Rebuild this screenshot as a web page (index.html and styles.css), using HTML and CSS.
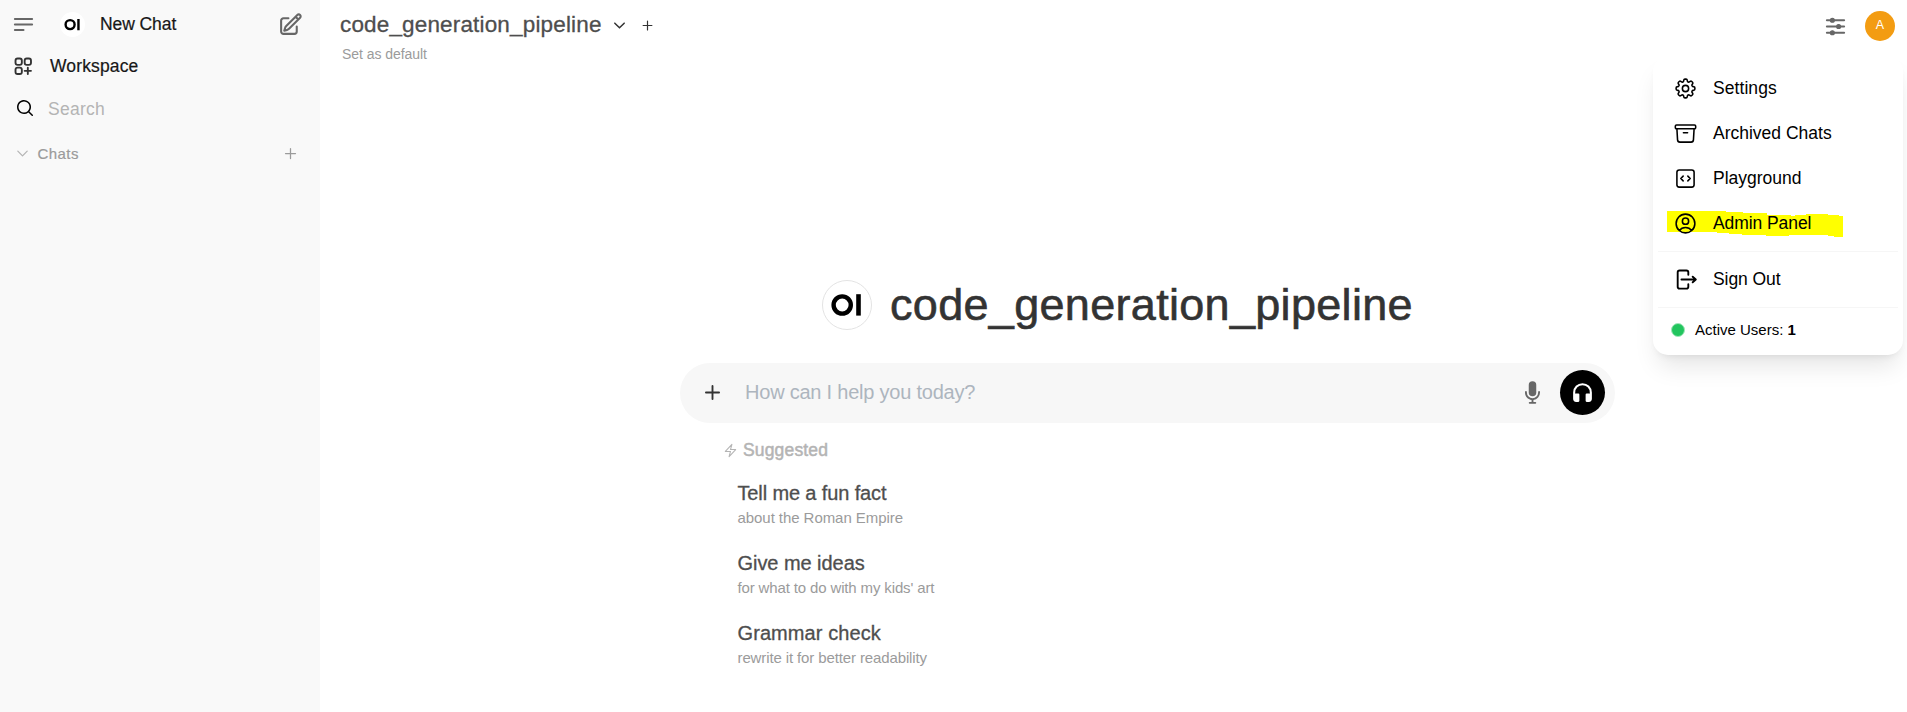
FILE: index.html
```html
<!DOCTYPE html>
<html lang="en">
<head>
<meta charset="utf-8">
<title>Open WebUI</title>
<link rel="stylesheet" href="styles.css">
</head>
<body>
<div class="app">
  <aside class="sidebar">
    <div class="side-head">
      <svg class="icon i25 gray" viewBox="0 0 24 24" stroke-width="2"><path d="M3.75 6.75h16.5M3.75 12h16.5m-16.5 5.25H12"/></svg>
      <svg class="logo-sm" viewBox="0 0 50 50"><circle cx="25" cy="25" r="25" fill="#fff"/><circle cx="20.2" cy="25.2" r="9" fill="none" stroke="#000" stroke-width="4.8"/><rect x="34.5" y="14" width="4.8" height="22.5"/></svg>
      <span class="t new-chat">New Chat</span>
      <svg class="icon i25 gray edit" viewBox="0 0 24 24" stroke-width="2"><path d="m16.862 4.487 1.687-1.688a1.875 1.875 0 1 1 2.652 2.652L10.582 16.07a4.5 4.5 0 0 1-1.897 1.13L6 18l.8-2.685a4.5 4.5 0 0 1 1.13-1.897l8.932-8.931Zm0 0L19.5 7.125M18 14v4.75A2.25 2.25 0 0 1 15.75 21H5.25A2.25 2.25 0 0 1 3 18.75V8.25A2.25 2.25 0 0 1 5.25 6H10"/></svg>
    </div>
    <div class="side-work">
      <svg class="icon i22 dark" viewBox="0 0 24 24" stroke-width="2"><path d="M13.5 16.875h3.375m0 0h3.375m-3.375 0V13.5m0 3.375v3.375M6 10.5h2.25a2.25 2.25 0 0 0 2.25-2.25V6a2.25 2.25 0 0 0-2.25-2.25H6A2.25 2.25 0 0 0 3.75 6v2.25A2.25 2.25 0 0 0 6 10.5Zm0 9.75h2.25A2.25 2.25 0 0 0 10.5 18v-2.25a2.25 2.25 0 0 0-2.25-2.25H6a2.25 2.25 0 0 0-2.25 2.25V18A2.25 2.25 0 0 0 6 20.25Zm9.75-9.75H18a2.25 2.25 0 0 0 2.25-2.25V6A2.25 2.25 0 0 0 18 3.75h-2.25A2.25 2.25 0 0 0 13.5 6v2.25a2.25 2.25 0 0 0 2.25 2.25Z"/></svg>
      <span class="t work">Workspace</span>
    </div>
    <div class="side-search">
      <svg class="solid i20" viewBox="0 0 20 20"><path fill-rule="evenodd" d="M9 3.5a5.5 5.5 0 100 11 5.5 5.5 0 000-11zM2 9a7 7 0 1112.452 4.391l3.328 3.329a.75.75 0 11-1.06 1.06l-3.329-3.328A7 7 0 012 9z"/></svg>
      <span class="t search">Search</span>
    </div>
    <div class="side-chats">
      <svg class="icon i15 light" viewBox="0 0 24 24" stroke-width="2"><path d="m19.5 8.25-7.5 7.5-7.5-7.5"/></svg>
      <span class="t chats">Chats</span>
      <svg class="icon i15 mid plus" viewBox="0 0 24 24" stroke-width="2"><path d="M12 4v16m8-8H4"/></svg>
    </div>
  </aside>

  <main class="main">
    <header class="topbar">
      <div class="model">
        <div class="model-row">
          <span class="t model-name">code_generation_pipeline</span>
          <svg class="icon i15 dark" viewBox="0 0 24 24" stroke-width="2.4"><path d="m19.5 8.25-7.5 7.5-7.5-7.5"/></svg>
          <svg class="icon i15 dark add" viewBox="0 0 24 24" stroke-width="1.9"><path d="M12 5v14m7-7H5"/></svg>
        </div>
        <span class="t default">Set as default</span>
      </div>
      <div class="actions">
        <svg class="icon i25 gray" viewBox="0 0 24 24" stroke-width="2"><g fill="currentColor" stroke="none"><circle cx="9" cy="6" r="2"/><circle cx="15" cy="12" r="2"/><circle cx="9" cy="18" r="2"/></g><path d="M10.5 6h9.75M10.5 6a1.5 1.5 0 1 1-3 0m3 0a1.5 1.5 0 1 0-3 0M3.75 6H7.5m3 12h9.75m-9.75 0a1.5 1.5 0 0 1-3 0m3 0a1.5 1.5 0 0 0-3 0m-3.75 0H7.5m9-6h3.75m-3.75 0a1.5 1.5 0 0 1-3 0m3 0a1.5 1.5 0 0 0-3 0m-9.75 0h9.75"/></svg>
        <span class="avatar">A</span>
      </div>
    </header>

    <section class="center">
      <div class="hero">
        <svg class="logo-lg" viewBox="0 0 50 50"><circle cx="25" cy="25" r="24.5" fill="#fff" stroke="#e3e3e3"/><circle cx="20.2" cy="25" r="8.6" fill="none" stroke="#000" stroke-width="4.4"/><rect x="34.2" y="14.2" width="4.6" height="21.4"/></svg>
        <span class="t hero-name">code_generation_pipeline</span>
      </div>
      <div class="prompt">
        <svg class="solid i25 dark prompt-plus" viewBox="0 0 20 20"><path d="M10.75 4.75a.75.75 0 0 0-1.5 0v4.5h-4.5a.75.75 0 0 0 0 1.5h4.5v4.5a.75.75 0 0 0 1.5 0v-4.5h4.5a.75.75 0 0 0 0-1.5h-4.5v-4.5Z"/></svg>
        <span class="t ask">How can I help you today?</span>
        <svg class="solid i25 gray mic" viewBox="0 0 20 20"><path d="M7 4a3 3 0 0 1 6 0v6a3 3 0 1 1-6 0V4Z"/><path d="M5.5 9.643a.75.75 0 0 0-1.5 0V10c0 3.06 2.29 5.585 5.25 5.954V17.5h-1.5a.75.75 0 0 0 0 1.5h4.5a.75.75 0 0 0 0-1.5h-1.5v-1.546A6.001 6.001 0 0 0 16 10v-.357a.75.75 0 0 0-1.5 0V10a4.5 4.5 0 0 1-9 0v-.357Z"/></svg>
        <span class="call"><svg class="i25" viewBox="0 0 24 24" fill="#fff"><path fill-rule="evenodd" d="M12 5a7 7 0 0 0-7 7v1.17c.313-.11.65-.17 1-.17h2a1 1 0 0 1 1 1v6a1 1 0 0 1-1 1H6a3 3 0 0 1-3-3v-6a9 9 0 0 1 18 0v6a3 3 0 0 1-3 3h-2a1 1 0 0 1-1-1v-6a1 1 0 0 1 1-1h2c.35 0 .687.06 1 .17V12a7 7 0 0 0-7-7Z"/></svg></span>
      </div>
      <div class="suggested">
        <svg class="icon bolt" viewBox="0 0 24 24" stroke-width="1.7"><path d="m3.75 13.5 10.5-11.25L12 10.5h8.25L9.75 21.75 12 13.5H3.75Z"/></svg>
        <span class="t sug-title">Suggested</span>
      </div>
      <div class="cards">
        <div class="card"><span class="t c1">Tell me a fun fact</span><span class="t s1">about the Roman Empire</span></div>
        <div class="card"><span class="t c2">Give me ideas</span><span class="t s2">for what to do with my kids' art</span></div>
        <div class="card"><span class="t c3">Grammar check</span><span class="t s3">rewrite it for better readability</span></div>
      </div>
    </section>
  </main>

  <nav class="menu">
    <div class="item">
      <svg class="icon i25" viewBox="0 0 24 24" stroke-width="1.5"><path d="M10.343 3.94c.09-.542.56-.94 1.11-.94h1.093c.55 0 1.02.398 1.11.94l.149.894c.07.424.384.764.78.93.398.164.855.142 1.205-.108l.737-.527a1.125 1.125 0 0 1 1.45.12l.773.774c.39.389.44 1.002.12 1.45l-.527.737c-.25.35-.272.806-.107 1.204.165.397.505.71.93.78l.893.15c.543.09.94.559.94 1.109v1.094c0 .55-.397 1.02-.94 1.11l-.894.149c-.424.07-.764.383-.929.78-.165.398-.143.854.107 1.204l.527.738c.32.447.269 1.06-.12 1.45l-.774.773a1.125 1.125 0 0 1-1.449.12l-.738-.527c-.35-.25-.806-.272-1.203-.107-.398.165-.71.505-.781.929l-.149.894c-.09.542-.56.94-1.11.94h-1.094c-.55 0-1.019-.398-1.11-.94l-.148-.894c-.071-.424-.384-.764-.781-.93-.398-.164-.854-.142-1.204.108l-.738.527c-.447.32-1.06.269-1.45-.12l-.773-.774a1.125 1.125 0 0 1-.12-1.45l.527-.737c.25-.35.272-.806.108-1.204-.165-.397-.506-.71-.93-.78l-.894-.15c-.542-.09-.94-.56-.94-1.109v-1.094c0-.55.398-1.02.94-1.11l.894-.149c.424-.07.765-.383.93-.78.165-.398.143-.854-.108-1.204l-.526-.738a1.125 1.125 0 0 1 .12-1.45l.773-.773a1.125 1.125 0 0 1 1.45-.12l.737.527c.35.25.807.272 1.204.107.397-.165.71-.505.78-.929l.15-.894Z"/><path d="M15 12a3 3 0 1 1-6 0 3 3 0 0 1 6 0Z"/></svg>
      <span class="t m1">Settings</span>
    </div>
    <div class="item">
      <svg class="icon i25" viewBox="0 0 24 24" stroke-width="1.5"><path d="m20.25 7.5-.625 10.632a2.25 2.25 0 0 1-2.247 2.118H6.622a2.25 2.25 0 0 1-2.247-2.118L3.75 7.5M10 11.25h4M3.375 7.5h17.25c.621 0 1.125-.504 1.125-1.125v-1.5c0-.621-.504-1.125-1.125-1.125H3.375c-.621 0-1.125.504-1.125 1.125v1.5c0 .621.504 1.125 1.125 1.125Z"/></svg>
      <span class="t m2">Archived Chats</span>
    </div>
    <div class="item">
      <svg class="icon i25" viewBox="0 0 24 24" stroke-width="1.5"><path d="M14.25 9.75 16.5 12l-2.25 2.25m-4.5 0L7.5 12l2.25-2.25M6 20.25h12A2.25 2.25 0 0 0 20.25 18V6A2.25 2.25 0 0 0 18 3.75H6A2.25 2.25 0 0 0 3.75 6v12A2.25 2.25 0 0 0 6 20.25Z"/></svg>
      <span class="t m3">Playground</span>
    </div>
    <div class="item marked">
      <svg class="marker" viewBox="0 0 176 26"><path fill="#ff0" d="M0 0h59v1h17v1h24v2h24v1h4V4h11V3h22v1h11v1h4v21h-9v-1h-6v-1h-39v1h-23v-1h-24v-1h-13v-1H50v-1H0Z"/></svg>
      <svg class="icon i25" viewBox="0 0 24 24" stroke-width="1.5"><path d="M17.982 18.725A7.488 7.488 0 0 0 12 15.75a7.488 7.488 0 0 0-5.982 2.975m11.963 0a9 9 0 1 0-11.963 0m11.963 0A8.966 8.966 0 0 1 12 21a8.966 8.966 0 0 1-5.982-2.275M15 9.75a3 3 0 1 1-6 0 3 3 0 0 1 6 0Z"/></svg>
      <span class="t m4">Admin Panel</span>
    </div>
    <hr>
    <div class="item">
      <svg class="solid i25" viewBox="0 0 20 20"><path fill-rule="evenodd" d="M3 4.25A2.25 2.25 0 0 1 5.25 2h5.5A2.25 2.25 0 0 1 13 4.25v2a.75.75 0 0 1-1.5 0v-2a.75.75 0 0 0-.75-.75h-5.5a.75.75 0 0 0-.75.75v11.5c0 .414.336.75.75.75h5.5a.75.75 0 0 0 .75-.75v-2a.75.75 0 0 1 1.5 0v2A2.25 2.25 0 0 1 10.75 18h-5.5A2.25 2.25 0 0 1 3 15.75V4.25Z"/><path fill-rule="evenodd" d="M6 10a.75.75 0 0 1 .75-.75h9.546l-1.048-.943a.75.75 0 1 1 1.004-1.114l2.5 2.25a.75.75 0 0 1 0 1.114l-2.5 2.25a.75.75 0 1 1-1.004-1.114l1.048-.943H6.75A.75.75 0 0 1 6 10Z"/></svg>
      <span class="t m5">Sign Out</span>
    </div>
    <hr>
    <div class="active"><span class="dot"></span><span class="t m6">Active Users: <b>1</b></span></div>
  </nav>
</div>
</body>
</html>
```
FILE: styles.css
```css
* { box-sizing: border-box; }
body { margin: 0; font-family: "Liberation Sans", Arial, sans-serif; background: #fff; color: #000; overflow: hidden; }
.app { position: relative; display: flex; height: 712px; }
.t { white-space: nowrap; }
.icon { fill: none; stroke: currentColor; stroke-linecap: round; stroke-linejoin: round; flex: none; display: block; }
.solid { fill: currentColor; flex: none; display: block; }
.i25 { width: 25px; height: 25px; flex: none; }
.i22 { width: 22.5px; height: 22.5px; }
.i20 { width: 20px; height: 20px; }
.i15 { width: 15px; height: 15px; }
.gray { color: #676767; }
.dark { color: #333; }
.mid { color: #9b9b9b; }
.light { color: #b4b4b4; }

.sidebar { width: 320px; flex: none; background: #f9f9f9; }
.sidebar > div { display: flex; align-items: center; }
.side-head { height: 49px; padding: 0 17px 0 11px; }
.logo-sm { width: 25px; height: 25px; margin-left: 24px; }
.new-chat { font-size: 17.5px; margin-left: 15px; color: #171717; letter-spacing: -.08px; -webkit-text-stroke: .2px; }
.edit { margin-left: auto; }
.side-work { height: 36px; padding: 0 0 1px 12px; }
.work { font-size: 17.5px; margin-left: 15.5px; color: #171717; letter-spacing: .13px; -webkit-text-stroke: .2px; }
.side-search { height: 46px; padding: 0 0 0 15px; }
.search { font-size: 17.5px; margin: 2px 0 0 13px; color: #b4b4b4; letter-spacing: .25px; }
.side-chats { height: 45px; padding: 0 22px 0 15px; }
.chats { font-size: 15px; margin-left: 7.5px; color: #9b9b9b; letter-spacing: .45px; -webkit-text-stroke: .2px; }
.plus { margin-left: auto; }

.main { flex: 1; display: flex; flex-direction: column; }
.topbar { display: flex; justify-content: space-between; height: 70px; padding: 11px 12px 0 20px; }
.model-row { display: flex; align-items: center; height: 28px; }
.model-name { font-size: 22.5px; color: #4e4e4e; width: 272px; letter-spacing: .16px; -webkit-text-stroke: .3px; }
.add { margin-left: 13px; }
.default { display: block; font-size: 14px; line-height: 20px; margin: 5px 0 0 2px; color: #9b9b9b; letter-spacing: -.05px; }
.actions { display: flex; align-items: center; gap: 17px; height: 30px; }
.avatar { width: 30px; height: 30px; border-radius: 50%; background: #f39c12; color: #fff; font-size: 12.5px; line-height: 29px; text-align: center; }

.center { width: 935px; margin: 210px 0 0 360px; }
.hero { display: flex; align-items: center; height: 50px; margin-left: 142px; }
.logo-lg { width: 50px; height: 50px; flex: none; }
.hero-name { font-size: 45px; line-height: 50px; margin-left: 18px; color: #333; letter-spacing: .31px; -webkit-text-stroke: .6px; }
.prompt { display: flex; align-items: center; height: 60px; margin-top: 33px; padding: 0 10px 1px 20px; border-radius: 30px; background: #f7f7f7; }
.ask { font-size: 20px; margin-left: 20px; color: #adb5be; letter-spacing: -.22px; }
.mic { margin-left: auto; }
.call { display: flex; align-items: center; justify-content: center; width: 45px; height: 45px; margin-left: 15px; border-radius: 50%; background: #000; }
.suggested { display: flex; align-items: center; height: 24px; margin: 15px 0 0 43px; color: #b4b4b4; }
.bolt { width: 15px; height: 15px; }
.sug-title { font-size: 17.5px; margin-left: 5px; letter-spacing: .16px; -webkit-text-stroke: .5px; }
.cards { margin: 14px 0 0 57.5px; }
.card { height: 70px; padding-top: 5px; display: flex; flex-direction: column; align-items: flex-start; }
.c1, .c2, .c3 { font-size: 20px; line-height: 25px; color: #4e4e4e; -webkit-text-stroke: .3px; }
.c1 { letter-spacing: -.13px; }
.c2 { letter-spacing: -.05px; }
.c3 { letter-spacing: .08px; }
.s1, .s2, .s3 { font-size: 15px; line-height: 20px; margin-top: 2px; color: #9b9b9b; letter-spacing: -.12px; }
.s1 { letter-spacing: -.06px; }
.s2 { letter-spacing: -.14px; }

.menu { position: absolute; left: 1653px; top: 56px; width: 250px; height: 299px; padding: 10px 5px 0; background: #fff; border-radius: 15px; box-shadow: 0 16px 24px -5px rgba(0,0,0,.1), 0 5px 8px -5px rgba(0,0,0,.1); }
.item { position: relative; display: flex; align-items: center; gap: 15px; height: 45px; padding-left: 15px; font-size: 17.5px; }
.item > .icon, .item > .solid, .item > .t { position: relative; }
.m1 { letter-spacing: .07px; }
.m4, .m5 { letter-spacing: -.08px; }
.menu hr { height: 1px; margin: 5px 0; border: 0; background: #f6f6f6; }
.marker { position: absolute; left: 9px; top: 10px; width: 176px; height: 26px; }
.active { display: flex; align-items: center; height: 34px; padding-left: 13px; font-size: 15px; }
.m6 { margin-top: -2px; }
.dot { width: 14px; height: 14px; border-radius: 50%; background: #22c55e; border: 1.5px solid #a0e6b9; margin-right: 10px; }
```
